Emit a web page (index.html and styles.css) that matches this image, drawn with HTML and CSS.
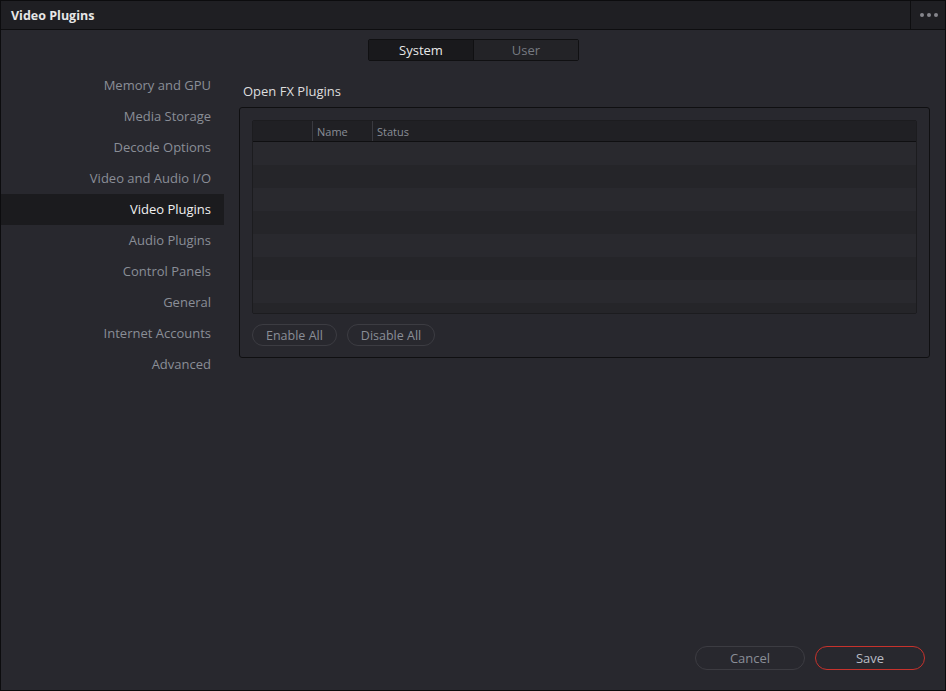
FILE: index.html
```html
<!DOCTYPE html>
<html>
<head>
<meta charset="utf-8">
<link rel="stylesheet" href="styles.css">
</head>
<body>
<div class="window">
  <div class="titlebar">
    <div class="title">Video Plugins</div>
    <div class="menu"><span class="dot"></span><span class="dot"></span><span class="dot"></span></div>
  </div>
  <div class="body">
    <div class="seg-wrap">
      <div class="seg">
        <div class="seg-item active">System</div>
        <div class="seg-item">User</div>
      </div>
    </div>
    <div class="content">
      <div class="sidebar">
        <div class="nav-item">Memory and GPU</div>
        <div class="nav-item">Media Storage</div>
        <div class="nav-item">Decode Options</div>
        <div class="nav-item">Video and Audio I/O</div>
        <div class="nav-item selected">Video Plugins</div>
        <div class="nav-item">Audio Plugins</div>
        <div class="nav-item">Control Panels</div>
        <div class="nav-item">General</div>
        <div class="nav-item">Internet Accounts</div>
        <div class="nav-item">Advanced</div>
      </div>
      <div class="panel">
        <div class="section-title">Open FX Plugins</div>
        <div class="group">
          <div class="table">
            <div class="thead">
              <div class="th c1"></div>
              <div class="th c2">Name</div>
              <div class="th c3">Status</div>
            </div>
            <div class="tbody">
              <div class="row"></div>
              <div class="row alt"></div>
              <div class="row"></div>
              <div class="row alt"></div>
              <div class="row"></div>
              <div class="row alt"></div>
              <div class="row"></div>
              <div class="row alt"></div>
            </div>
          </div>
          <div class="group-actions">
            <div class="pill">Enable All</div>
            <div class="pill">Disable All</div>
          </div>
        </div>
      </div>
    </div>
    <div class="footer">
      <div class="btn">Cancel</div>
      <div class="btn primary">Save</div>
    </div>
  </div>
</div>
</body>
</html>
```

FILE: styles.css
```css
* { box-sizing: border-box; }
html, body { margin: 0; padding: 0; }
body {
  width: 946px;
  height: 691px;
  background: #28282e;
  font-family: "Open Sans", "Noto Sans", sans-serif;
  overflow: hidden;
}
.window {
  width: 946px;
  height: 691px;
  border: 1px solid #0c0c0e;
  display: flex;
  flex-direction: column;
  background: #28282e;
}
.titlebar {
  height: 29px;
  flex: none;
  background: #1f1f23;
  border-bottom: 1px solid #0e0e10;
  display: flex;
  align-items: center;
}
.title {
  flex: 1;
  padding-left: 10px;
  color: #e6e6e6;
  font-size: 12.5px;
  font-weight: 700;
}
.menu {
  width: 35px;
  height: 28px;
  border-left: 1px solid #0e0e10;
  display: flex;
  align-items: center;
  justify-content: center;
  gap: 3px;
  padding-left: 1px;
}
.dot {
  width: 4px;
  height: 4px;
  border-radius: 50%;
  background: #86868c;
}
.body {
  flex: 1;
  display: flex;
  flex-direction: column;
}
.seg-wrap {
  display: flex;
  justify-content: center;
  padding-top: 9px;
}
.seg {
  display: flex;
  border: 1px solid #101012;
  border-radius: 2px;
  height: 22px;
  width: 211px;
  margin-left: 1px;
}
.seg-item {
  flex: 1;
  display: flex;
  align-items: center;
  justify-content: center;
  font-size: 13px;
  color: #777a82;
  background: #232327;
}
.seg-item.active {
  background: #19191c;
  color: #e8e8e8;
  border-right: 1px solid #101012;
}
.content {
  flex: 1;
  display: flex;
  padding-top: 9px;
}
.sidebar {
  width: 223px;
  flex: none;
  display: flex;
  flex-direction: column;
}
.nav-item {
  height: 31px;
  line-height: 31px;
  text-align: right;
  padding-right: 13px;
  font-size: 13px;
  color: #8a8e97;
}
.nav-item.selected {
  background: #1b1b1e;
  color: #f0f0f0;
}
.panel {
  flex: 1;
  padding-left: 15px;
  padding-right: 15px;
}
.section-title {
  height: 37px;
  padding-left: 4px;
  padding-top: 12px;
  font-size: 13px;
  color: #dedede;
}
.group {
  border: 1px solid #0f0f11;
  border-radius: 3px;
  padding: 12px 12px 11px 12px;
}
.table {
  border: 1px solid #1c1c1f;
  border-radius: 2px;
  overflow: hidden;
}
.thead {
  display: flex;
  height: 21px;
  background: #202024;
  border-bottom: 1px solid #0f0f11;
}
.th {
  font-size: 11px;
  color: #8a8e97;
  line-height: 21px;
  padding-left: 4px;
}
.c1 { width: 59px; }
.c2 { width: 60px; border-left: 1px solid #3a3a40; }
.c3 { flex: 1; border-left: 1px solid #3a3a40; }
.tbody {
  height: 171px;
  overflow: hidden;
}
.row {
  height: 23px;
  background: #29292e;
}
.row.alt {
  background: #252529;
}
.group-actions {
  display: flex;
  gap: 10px;
  margin-top: 10px;
}
.pill {
  height: 22px;
  padding: 0 13px;
  border: 1px solid #3c3c42;
  border-radius: 11px;
  font-size: 12.5px;
  color: #8a8e97;
  display: flex;
  align-items: center;
}
.footer {
  flex: none;
  display: flex;
  justify-content: flex-end;
  gap: 10px;
  padding: 0 20px 20px 0;
}
.btn {
  width: 110px;
  height: 24px;
  border: 1px solid #3c3c42;
  border-radius: 12px;
  font-size: 13px;
  color: #8a8e97;
  display: flex;
  align-items: center;
  justify-content: center;
}
.btn.primary {
  border-color: #c7322c;
  color: #b8bcc4;
}
```
